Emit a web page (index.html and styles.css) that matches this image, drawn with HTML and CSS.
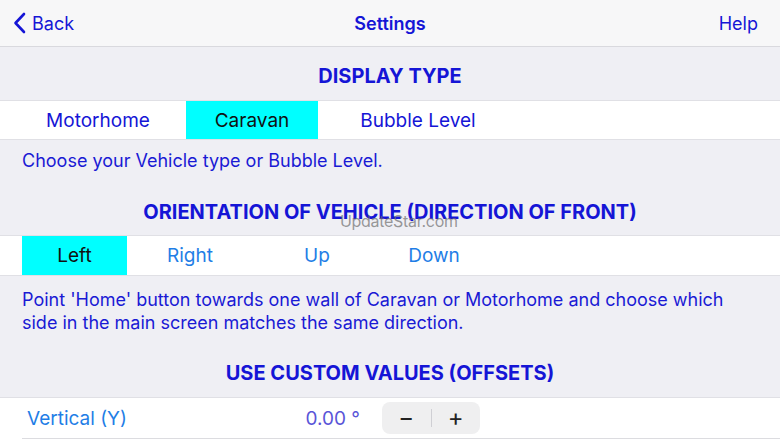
FILE: index.html
```html
<!DOCTYPE html>
<html lang="en">
<head>
    <meta charset="UTF-8">
    <meta name="viewport" content="width=device-width, initial-scale=1.0">
    <title>Settings</title>
    <link rel="stylesheet" href="styles.css">
</head>
<body>
    <header class="nav">
        <a href="#" class="nav-back">
            <svg class="chevron" width="13" height="22" viewBox="0 0 13 22">
                <path d="M11 2 L2.5 11 L11 20" fill="none" stroke="#1515d6" stroke-width="2.6" stroke-linecap="round" stroke-linejoin="round"/>
            </svg>
            Back
        </a>
        <div class="nav-title">Settings</div>
        <a href="#" class="nav-help">Help</a>
    </header>

    <main>
        <div class="section-title first">DISPLAY TYPE</div>
        <div class="seg-row type-row">
            <div class="seg seg-motor">Motorhome</div>
            <div class="seg seg-caravan active">Caravan</div>
            <div class="seg seg-bubble">Bubble Level</div>
        </div>
        <p class="note">Choose your Vehicle type or Bubble Level.</p>

        <div class="section-title">ORIENTATION OF VEHICLE (DIRECTION OF FRONT)</div>
        <div class="seg-row dir-row">
            <div class="seg seg-left active">Left</div>
            <div class="seg seg-right">Right</div>
            <div class="seg seg-up">Up</div>
            <div class="seg seg-down">Down</div>
        </div>
        <p class="note note-two">Point 'Home' button towards one wall of Caravan or Motorhome and choose which side in the main screen matches the same direction.</p>

        <div class="section-title third">USE CUSTOM VALUES (OFFSETS)</div>
        <div class="value-row">
            <div class="value-inner">
                <span class="value-label">Vertical (Y)</span>
                <span class="value-num">0.00 °</span>
                <div class="stepper">
                    <span class="step-btn">&minus;</span>
                    <span class="step-div"></span>
                    <span class="step-btn">+</span>
                </div>
            </div>
        </div>
    </main>

    <div class="watermark">UpdateStar.com</div>
</body>
</html>
```

FILE: styles.css
```css
body {
    margin: 0;
    font-family: Inter, "Noto Sans", sans-serif;
    background-color: #efeff4;
    color: #1515d6;
    width: 780px;
    height: 439px;
    overflow: hidden;
    position: relative;
}

.nav {
    display: flex;
    align-items: center;
    justify-content: space-between;
    height: 46px;
    padding: 0 22px 0 13px;
    background-color: #f7f7f8;
    border-bottom: 1px solid #d9d9de;
    position: relative;
}

.nav a {
    text-decoration: none;
    color: #1515d6;
    font-size: 18px;
}

.nav-back {
    display: flex;
    align-items: center;
    gap: 6px;
}

.nav-title {
    position: absolute;
    left: 0;
    right: 0;
    text-align: center;
    font-size: 18px;
    font-weight: 600;
    pointer-events: none;
}

.section-title {
    text-align: center;
    font-weight: 700;
    font-size: 20px;
    line-height: 22px;
    padding: 29px 0 12px;
}

.section-title.first {
    padding-top: 18px;
    padding-bottom: 13px;
}

.section-title.third {
    padding-top: 28px;
    padding-bottom: 13px;
}

.seg-row {
    display: flex;
    background-color: #fff;
    border-top: 1px solid #e0e0e5;
    border-bottom: 1px solid #e0e0e5;
}

.seg {
    display: flex;
    align-items: center;
    justify-content: center;
    font-size: 19px;
}

.type-row {
    height: 38px;
    padding-left: 10px;
}

.type-row .seg {
    color: #1515d6;
}

.seg-motor { width: 176px; }
.seg-caravan { width: 132px; }
.seg-bubble { width: 200px; }

.dir-row {
    height: 39px;
    padding-left: 22px;
}

.dir-row .seg {
    color: #1f7ee6;
}

.seg-left { width: 105px; }
.seg-right { width: 126px; }
.seg-up { width: 128px; }
.seg-down { width: 106px; }

.seg.active,
.dir-row .seg.active {
    background-color: #00ffff;
    color: #111;
}

.note {
    margin: 0;
    padding: 10px 22px 0;
    font-size: 18px;
    line-height: 22px;
    color: #1a1ad4;
}

.note-two {
    padding-top: 12px;
    padding-right: 30px;
    line-height: 23px;
}

.value-row {
    background-color: #fff;
    border-top: 1px solid #e0e0e5;
    padding-left: 22px;
}

.value-inner {
    display: flex;
    align-items: center;
    height: 40px;
    border-bottom: 1px solid #dcdce0;
}

.value-label {
    width: 275px;
    padding-left: 5px;
    font-size: 19px;
    color: #1f7ee6;
}

.value-num {
    width: 58px;
    font-size: 19px;
    color: #5a55d8;
    text-align: right;
}

.stepper {
    display: flex;
    align-items: center;
    margin-left: 22px;
    width: 98px;
    height: 32px;
    background-color: #efeff0;
    border-radius: 8px;
    color: #222;
}

.step-btn {
    flex: 1;
    text-align: center;
    font-size: 24px;
    line-height: 32px;
}

.step-div {
    width: 1px;
    height: 18px;
    background-color: #cfcfd4;
}

.watermark {
    position: absolute;
    left: 340px;
    top: 211px;
    font-size: 16px;
    color: rgba(110, 110, 110, 0.7);
    letter-spacing: -0.3px;
}
```
